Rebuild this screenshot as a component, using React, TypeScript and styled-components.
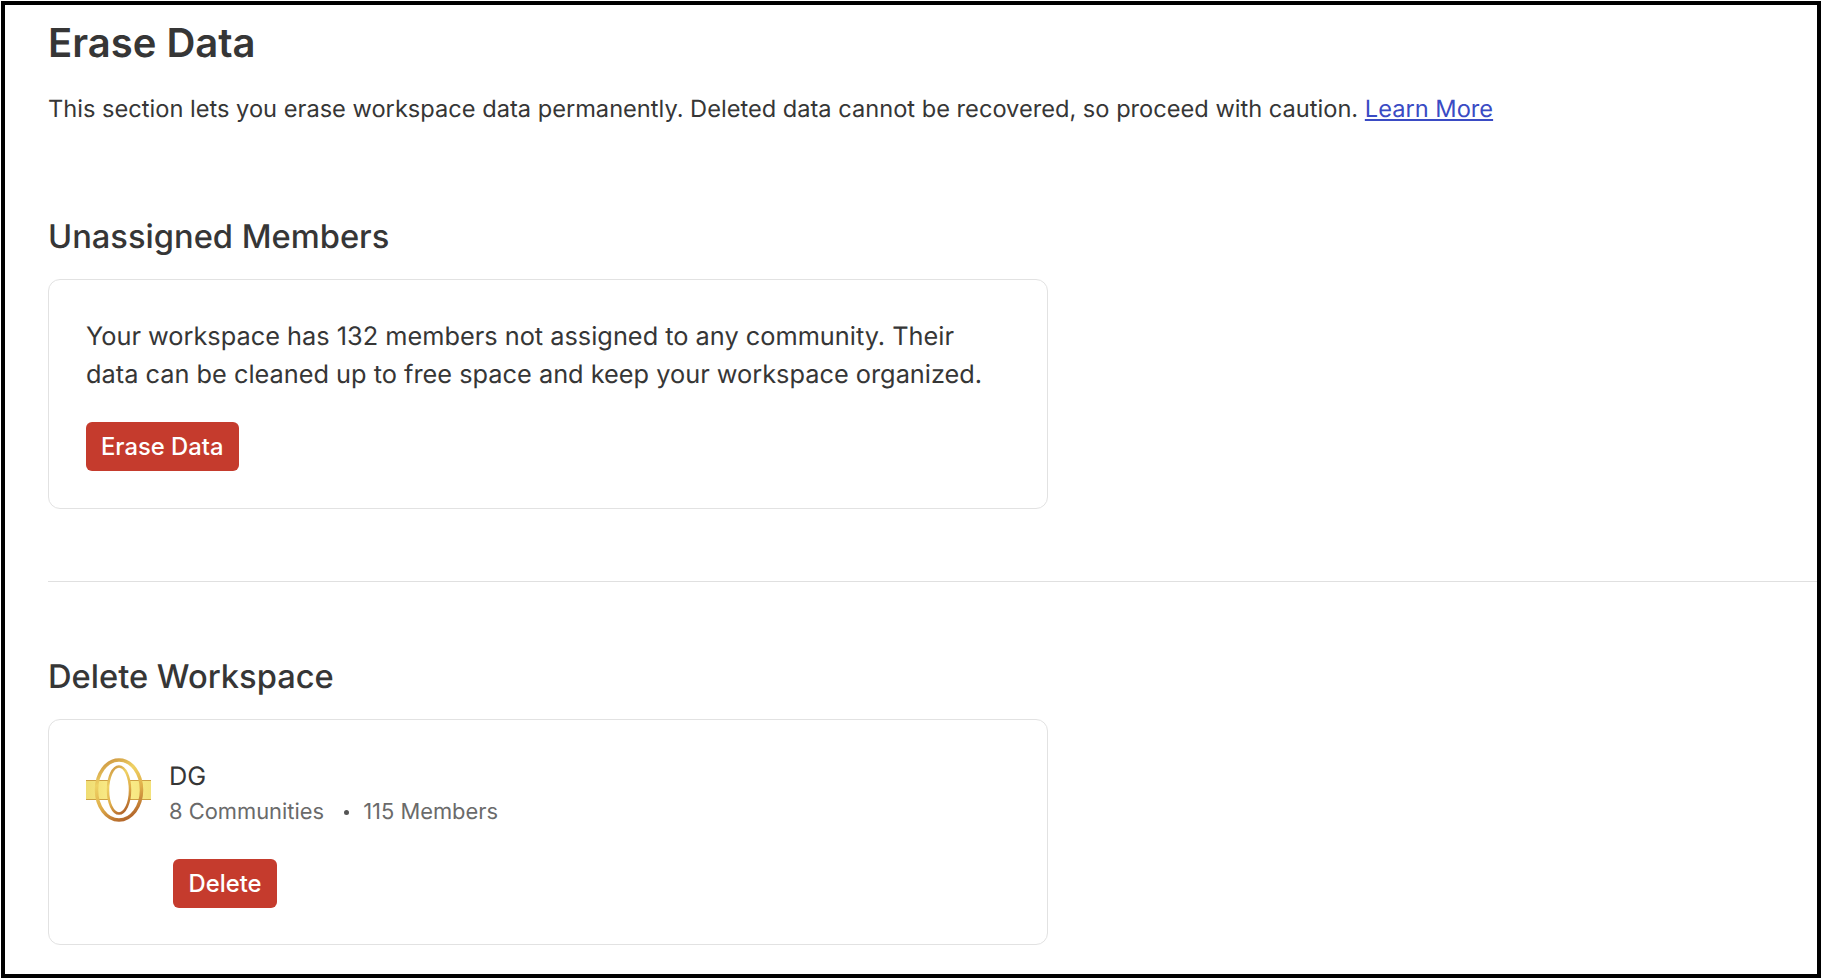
import React from "react"
import styled, { createGlobalStyle } from "styled-components"

const GlobalStyle = createGlobalStyle`
  html, body {
    margin: 0;
    padding: 0;
    background: #fff;
    font-family: Inter, "Liberation Sans", sans-serif;
    color: #363636;
    text-rendering: geometricPrecision;
  }
`

const Page = styled.div`
  box-sizing: border-box;
  width: 1822px;
  height: 978px;
  padding: 1px 1px 0;
  background: #fff;
`

const Frame = styled.div`
  box-sizing: border-box;
  height: 100%;
  border: 4px solid #000;
  padding: 15px 0 0 43px;
  overflow: hidden;
  background: #fff;
`

const Title = styled.h1`
  margin: 0;
  font-size: 40px;
  line-height: 46px;
  font-weight: 600;
  color: #363636;
`

const Intro = styled.p`
  margin: 25px 0 0;
  font-size: 23.64px;
  line-height: 36px;
  color: #363636;
  a {
    color: #3a4bc4;
    text-decoration: underline;
  }
`

const SectionTitle = styled.h2`
  margin: 0;
  font-size: 32.67px;
  line-height: 40px;
  font-weight: 500;
  color: #363636;
`

const Section = styled.section<{ $top: number }>`
  margin-top: ${(props) => props.$top}px;
`

const Card = styled.div<{ $height: number }>`
  box-sizing: border-box;
  width: 1000px;
  height: ${(props) => props.$height}px;
  margin-top: 23px;
  padding: 37px;
  border: 1px solid #e2e2e2;
  border-radius: 12px;
`

const CardText = styled.p`
  margin: 1px 0 0;
  font-size: 25.34px;
  line-height: 38px;
  color: #363636;
`

const DangerButton = styled.button<{ $gap: number; $indent?: number; $pad?: number }>`
  display: block;
  height: 49px;
  margin: ${(props) => props.$gap}px 0 0 ${(props) => props.$indent ?? 0}px;
  padding: 0 ${(props) => props.$pad ?? 15}px;
  border: 0;
  border-radius: 6px;
  background: #c53b2d;
  color: #fff;
  font-family: inherit;
  font-size: 23.8px;
  font-weight: 500;
`

const Divider = styled.hr`
  margin: 72px 0 0;
  border: 0;
  border-top: 1px solid #e0e0e0;
`

const WorkspaceRow = styled.div`
  display: flex;
  align-items: flex-start;
  gap: 17px;
`

const WorkspaceText = styled.div`
  padding-top: 3px;
`

const WorkspaceName = styled.div`
  font-size: 25.34px;
  line-height: 34px;
  color: #363636;
`

const WorkspaceMeta = styled.div`
  display: flex;
  align-items: center;
  gap: 12px;
  margin-top: 2px;
  font-size: 21.9px;
  line-height: 32px;
  color: #6a6a6a;
`

const Dot = styled.span`
  width: 5px;
  height: 5px;
  margin-left: 8px;
  margin-right: 2px;
  border-radius: 50%;
  background: #555;
`

const Logo = () => (
  <svg width="66" height="66" viewBox="0 0 66 66" style={{ flex: "none" }}>
    <defs>
      <linearGradient id="gold" x1="0.2" y1="0" x2="0.6" y2="1">
        <stop offset="0" stopColor="#cc9440" />
        <stop offset="0.3" stopColor="#efd264" />
        <stop offset="0.65" stopColor="#dfae4a" />
        <stop offset="1" stopColor="#b5692c" />
      </linearGradient>
      <linearGradient id="band" x1="0" y1="0" x2="1" y2="0">
        <stop offset="0" stopColor="#efdc72" />
        <stop offset="0.5" stopColor="#fdf08e" />
        <stop offset="1" stopColor="#f3e27a" />
      </linearGradient>
    </defs>
    <rect x="0" y="23" width="65" height="20" fill="url(#band)" />
    <path d="M0 23.5H65M0 42.5H65" stroke="#cda044" strokeWidth="1" />
    <ellipse cx="33" cy="33" rx="22.5" ry="30" fill="none" stroke="url(#gold)" strokeWidth="3.5" />
    <ellipse cx="33" cy="33" rx="11" ry="23.5" fill="#fff" stroke="url(#gold)" strokeWidth="2.5" />
  </svg>
)

export default function App() {
  return (
    <>
      <GlobalStyle />
      <Page>
        <Frame>
          <Title>Erase Data</Title>
          <Intro>
            This section lets you erase workspace data permanently. Deleted data cannot be recovered, so proceed with
            caution. <a href="#learn">Learn More</a>
          </Intro>
          <Section $top={89}>
            <SectionTitle>Unassigned Members</SectionTitle>
            <Card $height={230}>
              <CardText>
                Your workspace has 132 members not assigned to any community. Their
                <br />
                data can be cleaned up to free space and keep your workspace organized.
              </CardText>
              <DangerButton $gap={28}>Erase Data</DangerButton>
            </Card>
          </Section>
          <Divider />
          <Section $top={74}>
            <SectionTitle>Delete Workspace</SectionTitle>
            <Card $height={226}>
              <WorkspaceRow>
                <Logo />
                <WorkspaceText>
                  <WorkspaceName>DG</WorkspaceName>
                  <WorkspaceMeta>
                    <span>8 Communities</span>
                    <Dot />
                    <span>115 Members</span>
                  </WorkspaceMeta>
                </WorkspaceText>
              </WorkspaceRow>
              <DangerButton $gap={31} $indent={87} $pad={15.5}>
                Delete
              </DangerButton>
            </Card>
          </Section>
        </Frame>
      </Page>
    </>
  )
}
